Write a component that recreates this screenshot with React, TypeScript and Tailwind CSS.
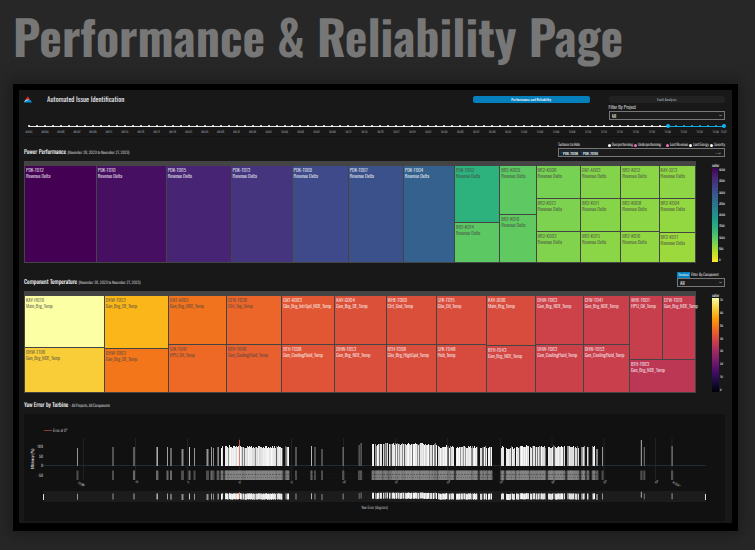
import React from "react";

type Tile = { id: string; label: string; color: string; dark?: boolean; size: number };
type Column = { size: number; tiles: Tile[] };

const rd = (id: string, color: string, size = 1, dark = false): Tile => ({
  id,
  label: "Revenue Delta",
  color,
  size,
  dark,
});
const ct = (id: string, label: string, color: string, size = 1, dark = false): Tile => ({ id, label, color, size, dark });

const powerColumns: Column[] = [
  { size: 72, tiles: [rd("PDK-T012", "#440154")] },
  { size: 70, tiles: [rd("PDK-T010", "#470f61")] },
  { size: 65, tiles: [rd("PDK-T005", "#482475")] },
  { size: 61, tiles: [rd("PDK-T013", "#44357e")] },
  { size: 56, tiles: [rd("PDK-T009", "#3e4a89")] },
  { size: 55, tiles: [rd("PDK-T007", "#3b518b")] },
  { size: 51, tiles: [rd("PDK-T004", "#34618d")] },
  { size: 45, tiles: [rd("PDK-T002", "#2db27d", 57, true), rd("BR2-K014", "#5cc863", 39, true)] },
  { size: 36, tiles: [rd("BR2-K009", "#5ec962", 48, true), rd("BR2-K010", "#60ca60", 47, true)] },
  { size: 44, tiles: [rd("BR2-K006", "#77d153", 33, true), rd("BR2-K013", "#7dd250", 32, true), rd("BR2-K003", "#81d34d", 31, true)] },
  { size: 40, tiles: [rd("GNT-A003", "#84d44b", 33, true), rd("BR2-K011", "#86d549", 32, true), rd("BR2-K015", "#8bd646", 31, true)] },
  { size: 38, tiles: [rd("BR2-K012", "#8ad647", 33, true), rd("BR2-K008", "#8dd645", 32, true), rd("BR2-K016", "#90d743", 31, true)] },
  { size: 36, tiles: [rd("KAY-J013", "#8ed645", 33, true), rd("BR2-K004", "#93d741", 33, true), rd("BR2-K017", "#9bd93c", 30, true)] },
];

const componentColumns: Column[] = [
  { size: 80, tiles: [ct("KAY-H010", "Main_Brg_Temp", "#fcffa4", 51, true), ct("DHW-T106", "Gen_Brg_NDE_Temp", "#f8cd37", 44, true)] },
  { size: 64, tiles: [ct("DHW-T053", "Gen_Brg_DE_Temp", "#fbb61a", 52, true), ct("DHW-T063", "Gen_Brg_DE_Temp", "#f3761b", 43, true)] },
  { size: 58, tiles: [ct("GNT-A003", "Gen_Brg_NDE_Temp", "#f1731d", 48, true), ct("SFK-T047", "HPU_Oil_Temp", "#ed6925", 47, true)] },
  { size: 55, tiles: [ct("CFW-T036", "Ctrl_Top_Temp", "#eb6628", 48, true), ct("BTH-T048", "Gen_CoolingFluid_Temp", "#e8602d", 47, true)] },
  { size: 53, tiles: [ct("GNT-A003", "Gbx_Brg_IntrSpd_NDE_Temp", "#e15734", 48), ct("BTH-T098", "Gen_CoolingFluid_Temp", "#df5337", 47)] },
  { size: 51, tiles: [ct("KAY-G004", "Gen_Brg_DE_Temp", "#db5039", 48), ct("DHW-T053", "Gen_Brg_NDE_Temp", "#da4f3b", 47)] },
  { size: 50, tiles: [ct("WHE-T009", "Ctrl_Gnd_Temp", "#da4f3a", 48), ct("BTH-T098", "Gbx_Brg_HighSpd_Temp", "#d94d3d", 47)] },
  { size: 50, tiles: [ct("SFK-T015", "Gbx_Oil_Temp", "#d94d3c", 48), ct("SFK-T048", "Hub_Temp", "#d74b3f", 47)] },
  { size: 49, tiles: [ct("KAY-J006", "Main_Brg_Temp", "#d84c3e", 49), ct("BTH-T043", "Gen_Brg_NDE_Temp", "#d24644", 46)] },
  { size: 47, tiles: [ct("DHW-T063", "Gen_Brg_NDE_Temp", "#cc4248", 48), ct("DHW-T063", "Gen_CoolingFluid_Temp", "#cb4149", 47)] },
  { size: 46, tiles: [ct("CFW-T041", "Gen_Brg_NDE_Temp", "#ca404a", 48), ct("DHW-T053", "Gen_CoolingFluid_Temp", "#c93f4b", 47)] },
];

function TileBox({ tile }: { tile: Tile }) {
  return (
    <div
      className={`min-h-0 min-w-0 basis-0 pt-[2px] pl-px text-[5px] leading-[6px] font-light whitespace-nowrap ${
        tile.dark ? "text-[#444444]" : "text-white"
      }`}
      style={{ backgroundColor: tile.color, flexGrow: tile.size }}
    >
      <div>{tile.id}</div>
      <div>{tile.label}</div>
    </div>
  );
}

function Treemap({ columns, children }: { columns: Column[]; children?: React.ReactNode }) {
  return (
    <div className="flex h-[102px] min-w-0 flex-1 gap-px bg-[#444444] px-px pt-[5px] pb-px">
      {columns.map((c, i) => (
        <div key={i} className="flex min-w-0 basis-0 flex-col gap-px" style={{ flexGrow: c.size }}>
          {c.tiles.map((t, j) => (
            <TileBox key={j} tile={t} />
          ))}
        </div>
      ))}
      {children}
    </div>
  );
}

function ColorScale({ labels, gradient }: { labels: string[]; gradient: string }) {
  return (
    <div className="flex w-[29px] flex-col pt-[3px] pl-4 text-[4px] leading-[4px] text-gray-200">
      <div>color</div>
      <div className="flex gap-px">
        <div className={`h-[94px] w-[7px] ${gradient}`} />
        <div className="flex flex-col justify-between text-[3px]">
          {labels.map((l) => (
            <span key={l}>{l}</span>
          ))}
        </div>
      </div>
    </div>
  );
}

function pad(n: number) {
  return String(n).padStart(2, "0");
}
const dates = Array.from({ length: 88 }, (_, i) => {
  const d = new Date(2023, 8, 1 + i);
  return `${pad(d.getMonth() + 1)}/${pad(d.getDate())}`;
});

function Timeline() {
  return (
    <div className="relative h-[14px] border-b border-[#121212] pr-px pl-[5px]">
      <div className="flex h-[6px] items-center justify-between bg-[linear-gradient(90deg,#e5e5e5_92%,#0ea5e0_92%)] bg-[length:100%_1px] bg-center bg-no-repeat">
        {dates.map((d, i) => (
          <div key={d} className="flex w-0 justify-center">
            <span
              className={`shrink-0 rounded-full ${
                i === 80 || i === 87 ? "size-1 bg-[#12b5f0]" : i > 80 ? "size-[2px] bg-[#12b5f0]" : "size-[2px] bg-white"
              }`}
            />
          </div>
        ))}
      </div>
      <div className="flex justify-between pt-[1px] text-[3px] leading-[4px] text-gray-400">
        {dates.map((d, i) => (
          <div key={d} className="flex w-0 justify-center">
            {(i % 2 === 0 || i === 87) && <span>{d}</span>}
          </div>
        ))}
      </div>
      <input type="range" min={0} max={87} defaultValue={80} aria-label="Start date" className="absolute inset-x-0 top-0 h-[6px] w-full opacity-0" />
      <input type="range" min={0} max={87} defaultValue={87} aria-label="End date" className="absolute inset-x-0 top-0 h-[6px] w-full opacity-0" />
    </div>
  );
}

function Select({ id, value }: { id: string; value: string }) {
  return (
    <div className="relative">
      <select
        id={id}
        className="block h-[9px] w-full appearance-none border border-[#777777] bg-[#1c1c1c] px-[2px] text-[5px] leading-[6px] text-gray-200"
      >
        <option>{value}</option>
      </select>
      <Chevron />
    </div>
  );
}

function Chevron() {
  return (
    <svg viewBox="0 0 4 4" className="pointer-events-none absolute top-[3px] right-[3px] size-[3px]">
      <path d="M0.5 1 L2 2.8 L3.5 1" fill="none" stroke="#aaa" />
    </svg>
  );
}

function Check({ label, pink }: { label: string; pink?: boolean }) {
  return (
    <label className="flex items-center gap-px">
      <input type="checkbox" defaultChecked={pink} className={`size-[3px] appearance-none rounded-full ${pink ? "bg-[#f472b6]" : "bg-white"}`} />
      {label}
    </label>
  );
}

type Bar = { x: number; w: number; top: number; shade: number };

const single: [number, number, number, number][] = [
  [77, 1, 447, 150], [112.5, 1, 446, 150], [133.5, 1, 446, 170], [156.5, 1.4, 446, 190], [167, 1, 446, 160],
  [170.5, 1, 447, 190], [181.5, 2, 448, 140], [189, 1, 446, 200], [194, 1, 447, 150], [206.5, 2, 448, 150],
  [211, 1, 446, 160], [213, 1, 447, 140], [295.5, 1, 446, 150], [311, 1, 445, 180], [314.5, 1, 446, 140],
  [321.5, 1, 448, 140], [342.5, 1.4, 446, 110], [358.5, 1.4, 444, 90], [360.5, 1.2, 442, 110],
  [602, 1, 446, 150], [640.8, 1.2, 439, 150], [643.8, 1, 446, 120], [671.5, 1.2, 445, 130],
];
const clusters: [number, number, number, number][] = [
  [217, 219, 445, 0.6], [221, 223, 445, 0.6], [225, 230, 445, 0.6], [230, 282, 445, 0.96], [282, 283, 445, 0.5],
  [285, 289, 445, 0.6], [372, 374, 442, 0.6], [375, 382, 443, 0.5], [383, 388, 442, 0.6], [389, 400, 442, 0.8],
  [400, 424, 442, 0.85], [424, 437, 443, 0.65], [438, 454, 445, 0.7], [456, 478, 445, 0.7], [480, 487, 445, 0.65],
  [488, 492, 445, 0.7], [501, 504, 445, 0.8], [506, 515, 446, 0.7], [516, 529, 445, 0.75], [530, 546, 445, 0.7],
  [548, 565, 445, 0.7], [567, 579, 445, 0.65], [581, 585, 445, 0.5], [587, 589, 445, 0.6], [592, 595, 445, 0.7], [596, 598, 446, 0.5],
];

function buildBars(): Bar[] {
  const bars: Bar[] = single.map(([x, w, top, shade]) => ({ x, w, top, shade }));
  let seed = 17;
  const next = () => {
    seed = (seed * 1103515245 + 12345) % 2147483648;
    return seed / 2147483648;
  };
  clusters.forEach(([a, b, top, density]) => {
    for (let x = a; x < b; x += 1) {
      const bright = next() < density;
      bars.push({
        x,
        w: 1,
        top: top + Math.round(next() * 2) - (next() > 0.9 ? 1 : 0),
        shade: Math.round(bright ? 215 + next() * 35 : 90 + next() * 70),
      });
    }
  });
  return bars;
}
const bars = buildBars();
const ticks: [number, string][] = [
  [135.5, "-10"], [187.5, "-5"], [239.5, "0°"], [291.5, "5°"], [343.5, "10°"], [395.5, "15°"],
  [447.5, "20°"], [500.5, "25°"], [552, "30°"], [604, "35°"], [655.5, "40°"],
];

function YawChart() {
  return (
    <svg viewBox="24 413 701 107" className="block w-full bg-[#111111] text-[4px]" role="img" aria-label="Yaw Error by Turbine">
      <line x1="44" x2="52" y1="429.5" y2="429.5" stroke="#8e3b34" strokeWidth="1" />
      <text x="53" y="431" fill="#ddd" fontSize="4" fontWeight="300">Error at 0°</text>
      {[83.5, ...ticks.map((t) => t[0]), 672].map((x) => (
        <line key={x} x1={x} x2={x} y1="437" y2="479" stroke="#222222" />
      ))}
      <line x1="43" x2="706" y1="464.5" y2="464.5" stroke="#1d2b36" />
      {[["100", 447], ["50", 456.5], ["0", 466], ["-50", 475.5]].map(([t, y]) => (
        <text key={t} x="43" y={y} textAnchor="end" fill="#bbb">{t}</text>
      ))}
      <text transform="translate(34 458) rotate(-90)" textAnchor="middle" fill="#ddd">Efficiency (%)</text>
      <rect x="43" y="490" width="663" height="11" fill="#1c1c1c" />
      {bars.map((b, i) => {
        const c = `rgb(${b.shade},${b.shade},${b.shade})`;
        return (
          <g key={i} fill={c}>
            <rect x={b.x} y={b.top} width={b.w} height={465 - b.top} />
            <rect x={b.x} y={492 + (b.top - 444) / 4} width={b.w} height="6" />
            <rect x={b.x - 0.5} y="469.5" width={b.w + 1} height="9.5" fill="#999999" fillOpacity={b.shade > 150 ? 0.65 : 0.45} />
          </g>
        );
      })}
      <line x1="215" x2="602" y1="473.5" y2="473.5" stroke="#222" strokeWidth="0.7" strokeDasharray="2 1" strokeOpacity="0.6" />
      <line x1="215" x2="602" y1="476.5" y2="476.5" stroke="#222" strokeWidth="0.5" strokeDasharray="1 1" strokeOpacity="0.6" />
      <line x1="239.5" x2="239.5" y1="439" y2="465" stroke="#e0604f" strokeOpacity="0.8" />
      <line x1="239.5" x2="239.5" y1="491" y2="498" stroke="#e0604f" strokeOpacity="0.8" />
      {ticks.map(([x, t]) => (
        <text key={x} transform={`translate(${x} 483) rotate(-30)`} fill="#aaa" fontSize="3">{t}</text>
      ))}
      <text transform="translate(77 482) rotate(30)" fill="#aaa" fontSize="3">-15.04</text>
      <text transform="translate(82 486) rotate(-30)" fill="#aaa" fontSize="3">-15</text>
      <text transform="translate(672 482) rotate(30)" fill="#aaa" fontSize="3">41.564°</text>
      <rect x="43" y="493" width="1" height="6" fill="#ddd" />
      <rect x="705" y="493" width="1" height="6" fill="#ddd" />
      <text x="374.5" y="508" textAnchor="middle" fill="#ddd" fontWeight="300">Yaw Error (degrees)</text>
    </svg>
  );
}

function Heading({ title, note }: { title: string; note: string }) {
  return (
    <h2 className="text-[6px] leading-[8px] font-normal whitespace-nowrap text-white">
      {title} <span className="text-[4px] font-light text-gray-200">{note}</span>
    </h2>
  );
}

export default function App() {
  return (
    <div className="min-h-screen bg-[#272727] pr-[17px] pb-5 pl-[13px] font-['Oswald','Roboto_Condensed','Liberation_Sans_Narrow','Liberation_Sans',sans-serif] [text-rendering:geometricPrecision]">
      <h1 className="h-[84px] text-[48px] leading-[72px] font-bold whitespace-nowrap text-[#777777]">Performance &amp; Reliability Page</h1>
      <main className="border-[6px] border-b-[8px] border-black bg-[#181818] pr-[7px] pl-[5px] shadow-[0_0_16px_4px_rgba(0,0,0,0.3)]">
        <header className="flex h-[32px] items-start pt-[6px]">
          <svg viewBox="0 0 24 20" className="h-[7px] w-2">
            <path d="M11 0 L18 10 Q12 13 5 10 Z" fill="#d9232e" />
            <path d="M5 11 L15 10 L12 14 L0 18 Z" fill="#fff" />
            <path d="M0 19 L7 13 L19 11 L24 19 Z" fill="#0095d9" />
          </svg>
          <h2 className="ml-[15px] text-[7px] leading-[8px] text-gray-200">Automated Issue Identification</h2>
          <nav className="ml-auto grid w-[252px] grid-cols-2 gap-x-[19px] text-[4px] leading-[7px]">
            <button className="h-[7px] rounded-[2px] bg-[#0680bd] text-white">Performance and Reliability</button>
            <button className="h-[7px] rounded-[2px] bg-[#222222] text-gray-400">Fault Analysis</button>
            <div className="col-start-2 pt-[2px]">
              <label htmlFor="project" className="block text-[5px] leading-[6px] font-light text-gray-100">Filter By Project</label>
              <Select id="project" value="All" />
            </div>
          </nav>
        </header>
        <div className="h-px" />
        <Timeline />

        <section>
          <div className="flex h-[24px] items-end justify-between pb-[4px]">
            <Heading title="Power Performance" note="(November 20, 2023 to November 27, 2023)" />
            <div className="w-[167px]">
              <div className="flex justify-between text-[4px] leading-[6px] font-light whitespace-nowrap text-white">
                <span>Turbines to Hide</span>
                <div className="flex gap-px">
                  <Check label="Overperforming" />
                  <Check label="Underperforming" pink />
                  <span className="w-[3px]" />
                  <Check label="Lost Revenue" pink />
                  <Check label="Lost Energy" />
                  <Check label="Severity" />
                </div>
              </div>
              <div className="relative flex h-[9px] items-center gap-px border border-[#777777] bg-[#1c1c1c] px-px text-[4px] leading-[6px] text-white">
                {["PDK-T008", "PDK-T006"].map((t) => (
                  <button key={t} className="flex h-[6px] w-[19px] items-center justify-between bg-[#1c2733] px-px">
                    <span className="text-[3px] text-[#5f87a8]">×</span>
                    {t}
                  </button>
                ))}
                <button className="mr-[6px] ml-auto text-gray-400" aria-label="Clear all">×</button>
                <Chevron />
              </div>
            </div>
          </div>
          <div className="flex">
            <Treemap columns={powerColumns} />
            <ColorScale
              labels={["4000", "3500", "3000", "2500", "2000", "1500", "1000", "500", "0"]}
              gradient="bg-[linear-gradient(#440154,#482878,#3e4989,#31688e,#26828e,#1f9e89,#35b779,#6ece58,#b5de2b,#fde725)]"
            />
          </div>
        </section>

        <section>
          <div className="flex h-[28px] items-end justify-between pb-[4px]">
            <Heading title="Component Temperature" note="(November 20, 2023 to November 27, 2023)" />
            <div className="w-[48px]">
              <div className="flex items-center gap-px text-[4px] leading-[6px] font-light whitespace-nowrap text-white">
                <button className="h-[6px] w-[13px] bg-[#0680bd] text-[3px] leading-[6px]">Download</button>
                <label htmlFor="component">Filter By Component</label>
              </div>
              <Select id="component" value="All" />
            </div>
          </div>
          <div className="flex">
            <Treemap columns={componentColumns}>
              <div className="flex min-w-0 basis-0 grow-[66] flex-col gap-px">
                <div className="flex min-h-0 basis-0 grow-[65] gap-px">
                  <TileBox tile={ct("WHE-T001", "HPU_Oil_Temp", "#c73e4c", 33)} />
                  <TileBox tile={ct("CFW-T019", "Gen_Brg_NDE_Temp", "#c43c4e", 33)} />
                </div>
                <TileBox tile={ct("BTH-T063", "Gen_Brg_NDE_Temp", "#bc3754", 31)} />
              </div>
            </Treemap>
            <ColorScale
              labels={["70", "60", "50", "40", "30", "20", "10", "0"]}
              gradient="bg-[linear-gradient(#fcffa4,#f7d13d,#fb9b06,#ed6925,#cf4446,#a52c60,#781c6d,#4a0c6b,#1b0c41,#000004)]"
            />
          </div>
        </section>

        <section className="pb-[2px]">
          <div className="flex h-[21px] items-end pb-[4px]">
            <Heading title="Yaw Error by Turbine" note="- All Projects, All Components" />
          </div>
          <YawChart />
        </section>
      </main>
    </div>
  );
}
